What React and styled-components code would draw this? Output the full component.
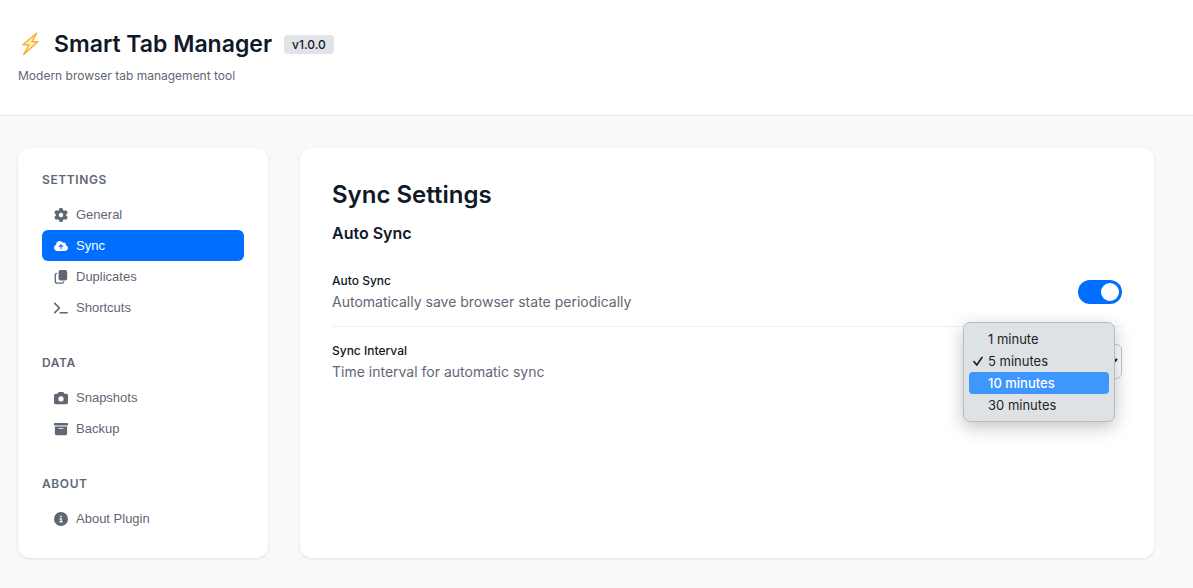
import React, { useState } from "react";
import styled, { createGlobalStyle } from "styled-components";
import {
  FaGear,
  FaCloudArrowUp,
  FaTerminal,
  FaCamera,
  FaBoxArchive,
  FaCircleInfo,
} from "react-icons/fa6";

const GlobalStyle = createGlobalStyle`
  *, *::before, *::after { box-sizing: border-box; }
  body {
    margin: 0;
    background: #f8f9fb;
    color: #111827;
    font-family: Inter, "Liberation Sans", sans-serif;
    -webkit-font-smoothing: antialiased;
  }
`;

const Header = styled.header`
  padding: 28px 18px 32px;
  background: #fff;
  border-bottom: 1px solid #e1e3e6;
`;

const Brand = styled.div`
  display: flex;
  align-items: center;
  gap: 12px;
  min-height: 32px;
`;

const Logo = styled.svg`
  width: 24px;
  height: 28px;
  flex: none;
`;

const AppTitle = styled.h1`
  margin: 0;
  font-size: 23px;
  line-height: 32px;
  font-weight: 600;
`;

const Version = styled.span`
  padding: 0 8px;
  border-radius: 4px;
  background: #e1e3e8;
  font-size: 12px;
  line-height: 19px;
  font-weight: 500;
`;

const Tagline = styled.p`
  margin: 8px 0 0;
  color: #5f6775;
  font-size: 12px;
  line-height: 15px;
`;

const Layout = styled.div`
  display: grid;
  grid-template-columns: 250px 1fr;
  gap: 32px;
  padding: 32px 39px 30px 18px;
`;

const Card = styled.section`
  padding: ${(p) => p.$pad};
  border-radius: 12px;
  background: #fff;
  box-shadow: 0 1px 3px rgba(0, 0, 0, 0.1);
`;

const Nav = styled.nav`
  display: flex;
  flex-direction: column;
  gap: 32px;
`;

const NavTitle = styled.h2`
  margin: 0 0 12px;
  color: #5f6775;
  font-size: 12px;
  line-height: 15px;
  font-weight: 600;
  letter-spacing: 0.05em;
  text-transform: uppercase;
`;

const NavButton = styled.button`
  display: flex;
  align-items: center;
  gap: 8px;
  width: 100%;
  height: 31px;
  padding: 0 12px;
  border: 0;
  border-radius: 6px;
  background: ${(p) => (p.$active ? "#006fff" : "transparent")};
  color: ${(p) => (p.$active ? "#fff" : "#5f6775")};
  font-family: "Liberation Sans", Arial, sans-serif;
  font-size: 13px;
  line-height: 15px;
  text-align: left;
  cursor: pointer;

  svg {
    width: 14px;
    height: 14px;
    flex: none;
  }
`;

const PageTitle = styled.h2`
  margin: 0 0 14px;
  font-size: 24px;
  line-height: 29px;
  font-weight: 600;
`;

const GroupTitle = styled.h3`
  margin: 0 0 14px;
  font-size: 16px;
  line-height: 20px;
  font-weight: 600;
`;

const Row = styled.div`
  display: flex;
  align-items: center;
  justify-content: space-between;
  gap: 16px;
  padding: 16px 0;
  border-bottom: ${(p) => (p.$last ? "0" : "1px solid #eeeff1")};
`;

const RowLabel = styled.label`
  display: block;
  margin-bottom: 4px;
  font-size: 12px;
  line-height: 16px;
  font-weight: 500;
`;

const RowHint = styled.p`
  margin: 0;
  color: #5f6775;
  font-size: 14px;
  line-height: 17px;
`;

const Toggle = styled.input`
  display: flex;
  align-items: center;
  appearance: none;
  width: 44px;
  height: 24px;
  margin: 0;
  padding: 3px;
  border-radius: 12px;
  background: #d1d5db;
  cursor: pointer;

  &::before {
    content: "";
    width: 18px;
    height: 18px;
    border-radius: 50%;
    background: #fff;
  }

  &:checked {
    justify-content: flex-end;
    background: #006fff;
  }
`;

const SelectWrap = styled.div`
  position: relative;
  width: 152px;
`;

const Select = styled.select`
  display: block;
  appearance: none;
  width: 100%;
  height: 35px;
  padding: 0 24px 0 12px;
  border: 1px solid #c6c9ce;
  border-radius: 6px;
  background: #fff;
  color: #111827;
  font-family: inherit;
  font-size: 13px;
`;

const Chevron = styled.svg`
  position: absolute;
  top: 12px;
  right: 4px;
  width: 10px;
  height: 10px;
  pointer-events: none;
`;

const Menu = styled.ul`
  position: absolute;
  top: -22px;
  left: -7px;
  width: 152px;
  margin: 0;
  padding: 5px;
  border: 1px solid #b9bcbf;
  border-radius: 7px;
  background: #dee2e5;
  box-shadow: 0 5px 18px rgba(0, 0, 0, 0.24);
  list-style: none;
`;

const Option = styled.li`
  display: flex;
  align-items: center;
  gap: 4px;
  height: 22px;
  padding-left: 3px;
  border-radius: 4px;
  background: ${(p) => (p.$hover ? "#3f96fd" : "transparent")};
  color: ${(p) => (p.$hover ? "#fff" : "#222426")};
  font-size: 13px;
  line-height: 16px;
  font-weight: ${(p) => (p.$hover ? 500 : 400)};
  cursor: default;
`;

const Tick = styled.svg`
  width: 12px;
  height: 12px;
  flex: none;
`;

const CopyIcon = () => (
  <svg viewBox="0 0 14 14" fill="none" aria-hidden="true">
    <rect x="4.6" y="0" width="8.6" height="10.4" rx="2" fill="currentColor" />
    <path
      d="M2.6 3.4c-1 .2-1.3.8-1.3 1.6v6.2c0 1.2.8 2 2 2h4.4c1 0 1.7-.5 1.9-1.4"
      stroke="currentColor"
      strokeWidth="1.3"
      strokeLinecap="round"
    />
  </svg>
);

const NAV = [
  {
    title: "Settings",
    items: [
      ["General", FaGear],
      ["Sync", FaCloudArrowUp],
      ["Duplicates", CopyIcon],
      ["Shortcuts", FaTerminal],
    ],
  },
  {
    title: "Data",
    items: [
      ["Snapshots", FaCamera],
      ["Backup", FaBoxArchive],
    ],
  },
  { title: "About", items: [["About Plugin", FaCircleInfo]] },
];

const INTERVALS = ["1 minute", "5 minutes", "10 minutes", "30 minutes"];

export default function App() {
  const [page, setPage] = useState("Sync");
  const [autoSync, setAutoSync] = useState(true);
  const [interval, setInterval] = useState("5 minutes");
  const [hovered, setHovered] = useState("10 minutes");

  return (
    <>
      <GlobalStyle />
      <Header>
        <Brand>
          <Logo viewBox="0 0 24 28" aria-hidden="true">
            <path
              d="M18.6 3.2 4.8 14.8l6 .2-5.2 9.6L20 11.8l-6-.3z"
              fill="#fff0a0"
              stroke="#f9a63a"
              strokeWidth="1.3"
              strokeLinejoin="round"
            />
          </Logo>
          <AppTitle>Smart Tab Manager</AppTitle>
          <Version>v1.0.0</Version>
        </Brand>
        <Tagline>Modern browser tab management tool</Tagline>
      </Header>
      <Layout>
        <Card as="aside" $pad="24px">
          <Nav>
            {NAV.map((group) => (
              <div key={group.title}>
                <NavTitle>{group.title}</NavTitle>
                {group.items.map(([label, Icon]) => (
                  <NavButton key={label} type="button" $active={label === page} onClick={() => setPage(label)}>
                    <Icon />
                    {label}
                  </NavButton>
                ))}
              </div>
            ))}
          </Nav>
        </Card>
        <Card as="main" $pad="32px">
          <PageTitle>Sync Settings</PageTitle>
          <GroupTitle>Auto Sync</GroupTitle>
          <Row>
            <div>
              <RowLabel htmlFor="auto-sync">Auto Sync</RowLabel>
              <RowHint>Automatically save browser state periodically</RowHint>
            </div>
            <Toggle
              id="auto-sync"
              type="checkbox"
              role="switch"
              checked={autoSync}
              onChange={(e) => setAutoSync(e.target.checked)}
            />
          </Row>
          <Row $last>
            <div>
              <RowLabel htmlFor="sync-interval">Sync Interval</RowLabel>
              <RowHint>Time interval for automatic sync</RowHint>
            </div>
            <SelectWrap>
              <Select id="sync-interval" value={interval} onChange={(e) => setInterval(e.target.value)}>
                {INTERVALS.map((v) => (
                  <option key={v}>{v}</option>
                ))}
              </Select>
              <Chevron viewBox="0 0 10 10" fill="none" stroke="#111" strokeWidth="2" aria-hidden="true">
                <path d="m1 3 4 4 4-4" />
              </Chevron>
              <Menu role="listbox" aria-label="Sync Interval">
                {INTERVALS.map((v) => (
                  <Option
                    key={v}
                    role="option"
                    aria-selected={v === interval}
                    $hover={v === hovered}
                    onMouseEnter={() => setHovered(v)}
                    onClick={() => setInterval(v)}
                  >
                    <Tick viewBox="0 0 12 12" fill="none" stroke="currentColor" strokeWidth="1.7" strokeLinecap="round" strokeLinejoin="round" aria-hidden="true">
                      {v === interval && <path d="m2 6.6 2.8 3.4L10 2.4" />}
                    </Tick>
                    {v}
                  </Option>
                ))}
              </Menu>
            </SelectWrap>
          </Row>
        </Card>
      </Layout>
    </>
  );
}
